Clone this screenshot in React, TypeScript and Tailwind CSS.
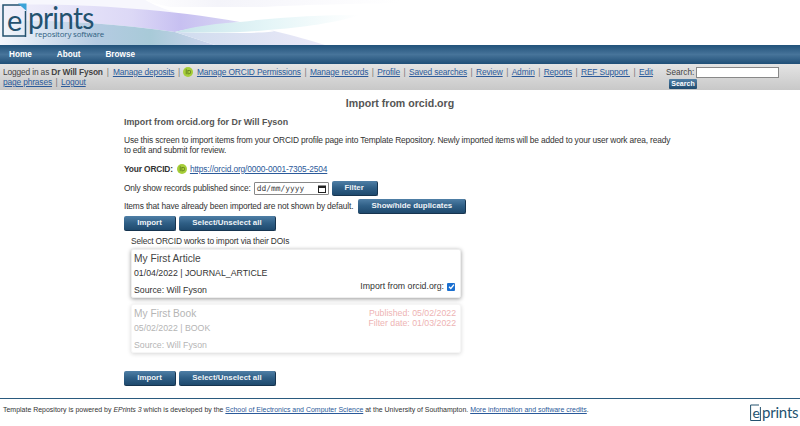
const font = { fontFamily: '"Liberation Sans", Arial, sans-serif' };

function Btn({ children, w }: { children: string; w: string }) {
  return (
    <button className={`${w} h-[15px] shrink-0 rounded-[2px] bg-gradient-to-b from-[#4f7fa6] via-[#2f5f86] to-[#1f4a6e] border-b border-r border-[#16344f] text-[#eef3f7] font-bold text-[7.9px] tracking-normal leading-[12px] pb-[1px] text-center`}>
      {children}
    </button>
  );
}

function Orcid({ size = 10 }: { size?: number }) {
  return (
    <svg width={size} height={size} viewBox="0 0 20 20" className="shrink-0">
      <circle cx="10" cy="10" r="10" fill="#a6ce39" />
      <rect x="5.6" y="6" width="1.6" height="8.4" fill="#5d7a1d" />
      <circle cx="6.4" cy="4.4" r="1" fill="#5d7a1d" />
      <path d="M9 6h3a4.2 4.2 0 0 1 0 8.4H9z M10.5 7.4v5.6h1.5a2.8 2.8 0 0 0 0-5.6z" fill="#5d7a1d" fillRule="evenodd" />
    </svg>
  );
}

function A({ children }: { children: React.ReactNode }) {
  return <a className="text-[#2b5a9a] underline">{children}</a>;
}

function Sep() {
  return <span className="text-[#777] mx-[3.5px]">|</span>;
}

function Logo() {
  return (
    <div className="relative w-[110px] h-[45px]">
      <svg width="30" height="38" viewBox="0 0 30 38" className="absolute left-[2px] top-[3px]">
        <path d="M21 2H1v31H23.5" fill="none" stroke="#24526f" strokeWidth="1.5" />
        <path d="M16 0.5 L24.5 0.5 V8 z" fill="#3ba3d8" />
        <path d="M23.5 8v26" fill="none" stroke="#24526f" strokeWidth="1.5" />
      </svg>
      <span className="absolute left-[7px] top-[2px] text-[29px] leading-[36px] text-[#24526f]" style={{ fontFamily: '"Lato", sans-serif' }}>e</span>
      <span className="absolute left-[28px] top-0 text-[31px] leading-[34px] tracking-[-0.8px] whitespace-nowrap text-[#24526f] scale-x-90 origin-left" style={{ fontFamily: '"Lato", sans-serif', fontWeight: 400 }}>prints</span>
      <span className="absolute left-[35px] top-[29px] text-[7.9px] leading-[11px] whitespace-nowrap text-[#2f5f7f]" style={{ fontFamily: '"Open Sans", sans-serif' }}>repository software</span>
    </div>
  );
}

export default function App() {
  return (
    <div className="w-[800px] h-[426px] bg-white overflow-hidden text-[8.4px] tracking-[-0.15px] text-[#333]" style={font}>
      <header className="relative h-[45px] bg-white">
        <svg width="800" height="45" viewBox="0 0 800 45" className="absolute inset-0">
          <defs>
            <linearGradient id="sw1" x1="0" x2="1">
              <stop offset="0" stopColor="#f2f1fb" />
              <stop offset="0.55" stopColor="#dcd8f6" />
              <stop offset="0.75" stopColor="#c7c0f1" />
              <stop offset="1" stopColor="#d9d6f4" />
            </linearGradient>
            <linearGradient id="sw2" x1="0" x2="1">
              <stop offset="0" stopColor="#c8e4ea" />
              <stop offset="0.5" stopColor="#e4f5f7" />
              <stop offset="1" stopColor="#ffffff" />
            </linearGradient>
            <linearGradient id="sw3" x1="0" x2="1">
              <stop offset="0" stopColor="#f4f6fc" />
              <stop offset="0.45" stopColor="#b4cbe2" />
              <stop offset="0.7" stopColor="#a8cad8" />
              <stop offset="1" stopColor="#cfd5ee" />
            </linearGradient>
            <linearGradient id="sw4" x1="0" x2="1">
              <stop offset="0" stopColor="#cfdcee" />
              <stop offset="1" stopColor="#ebe9f8" />
            </linearGradient>
            <linearGradient id="sw5" x1="0" x2="1">
              <stop offset="0" stopColor="#ffffff" />
              <stop offset="0.3" stopColor="#f4f4fa" />
              <stop offset="1" stopColor="#ffffff" />
            </linearGradient>
          </defs>
          <path d="M140 0H400V3C340 4 300 5 262 7H170z" fill="url(#sw5)" />
          <path d="M0 0H145C160 8 170 11 178 13C140 8 60 5 0 6z" fill="#f7f7fd" />
          <path d="M0 5C70 3 160 8 240 22C215 25 190 28 175 32C120 24 60 20 0 20z" fill="url(#sw1)" />
          <path d="M0 20C60 20 120 24 175 32L215 45H0z" fill="url(#sw3)" />
          <path d="M175 32C230 34 290 33 270 30C295 36 312 41 325 45H215z" fill="url(#sw4)" />
          <path d="M175 32C195 26 220 23 240 22C280 17 320 15 360 15C340 22 300 28 268 30C240 33 210 33 175 32z" fill="url(#sw2)" />
        </svg>
        <div className="relative">
          <Logo />
        </div>
      </header>
      <nav className="h-[19px] flex items-center pl-[9px] pt-[1px] gap-[25px] bg-gradient-to-b from-[#21527a] via-[#47749a] to-[#1f4f77] text-white font-bold text-[8.2px] tracking-normal">
        <span>Home</span>
        <span>About</span>
        <span>Browse</span>
      </nav>
      <div className="h-[26px] flex bg-gradient-to-b from-[#e4e4e4] to-[#c8c8c8] pl-[3px] leading-[10px] text-[#444]">
        <div className="w-[655px] pt-[3px]">
          <span>Logged in as <b>Dr Will Fyson</b></span>
          <span className="mx-[4px] text-[#777]">|</span>
          <A>Manage deposits</A><Sep />
          <span className="inline-block align-[-2px] mr-[3.5px]"><Orcid /></span>
          <A>Manage ORCID Permissions</A><Sep />
          <A>Manage records</A><Sep />
          <A>Profile</A><Sep />
          <A>Saved searches</A><Sep />
          <A>Review</A><Sep />
          <A>Admin</A><Sep />
          <A>Reports</A><Sep />
          <A>REF Support&nbsp;</A><Sep />
          <A>Edit page phrases</A><Sep />
          <A>Logout</A>
        </div>
        <div className="ml-[8px] pt-[3px] flex flex-col">
          <div className="flex items-center gap-[2px]">
            <span className="text-[8.2px] tracking-normal">Search:</span>
            <span className="w-[83px] h-[11px] bg-white border border-[#888]" />
          </div>
          <span className="mt-[1px] ml-[3px] w-[28px] h-[10px] rounded-[1px] bg-gradient-to-b from-[#4f7fa6] to-[#1f4a6e] text-white font-bold text-[7px] tracking-normal leading-[10px] text-center">Search</span>
        </div>
      </div>
      <h1 className="text-center font-bold text-[10.6px] tracking-normal leading-[13px] text-[#555] mt-[7px]">Import from orcid.org</h1>
      <main className="w-[552px] ml-[124px]">
        <h2 className="mt-[6px] font-bold text-[8.9px] tracking-normal leading-[12px] text-[#555]">Import from orcid.org for Dr Will Fyson</h2>
        <p className="mt-[8px] leading-[9.5px]">Use this screen to import items from your ORCID profile page into Template Repository. Newly imported items will be added to your user work area, ready to edit and submit for review.</p>
        <div className="mt-[9px] flex items-center gap-[3px] h-[10px]">
          <b className="mr-[1px]">Your ORCID:</b>
          <Orcid size={10} />
          <span><A>https://orcid.org/0000-0001-7305-2504</A></span>
        </div>
        <div className="mt-[7px] flex items-center h-[15px]">
          <span>Only show records published since:</span>
          <span className="ml-[3px] w-[75px] h-[13px] border border-[#888] rounded-[1px] bg-white flex items-center justify-between px-[2px] text-[7.9px] tracking-normal text-[#444]" style={{ fontFamily: '"DejaVu Sans Mono", monospace' }}>
            <span>dd/mm/yyyy</span>
            <svg width="8" height="8" viewBox="0 0 8 8"><rect x="0.5" y="1" width="7" height="6.5" fill="none" stroke="#222" /><rect x="0.5" y="1" width="7" height="2" fill="#222" /></svg>
          </span>
          <span className="ml-[3px]"><Btn w="w-[46px]">Filter</Btn></span>
        </div>
        <div className="mt-[3px] flex items-center h-[15px]">
          <span>Items that have already been imported are not shown by default.</span>
          <span className="ml-[5px]"><Btn w="w-[108px]">Show/hide duplicates</Btn></span>
        </div>
        <div className="mt-[2px] flex gap-[3px] h-[15px]">
          <Btn w="w-[52px]">Import</Btn>
          <Btn w="w-[97px]">Select/Unselect all</Btn>
        </div>
        <div className="ml-[7px] mt-[5px] leading-[10px]">Select ORCID works to import via their DOIs</div>
        <section className="ml-[7px] mt-[3px] w-[330px] h-[49px] bg-white rounded-[2px] border border-[#eee] shadow-[0_1px_4px_rgba(0,0,0,0.4)] relative pl-[2px] pt-[2px] tracking-normal">
          <div className="text-[10.2px] leading-[13px] text-[#444]">My First Article</div>
          <div className="mt-[3px] text-[8.75px] leading-[11px]">01/04/2022 | JOURNAL_ARTICLE</div>
          <div className="mt-[6px] text-[8.75px] leading-[11px]">Source: Will Fyson</div>
          <div className="absolute right-[5px] top-[31px] flex items-center gap-[3px] text-[8.75px] leading-[11px]">
            <span>Import from orcid.org:</span>
            <span className="w-[8px] h-[8px] rounded-[1px] bg-[#1a6fd0] flex items-center justify-center">
              <svg width="7" height="7" viewBox="0 0 8 8"><path d="M1.2 4.2 3.2 6.2 6.8 1.8" fill="none" stroke="#fff" strokeWidth="1.5" /></svg>
            </span>
          </div>
        </section>
        <section className="ml-[7px] mt-[6px] w-[330px] h-[49px] bg-white rounded-[2px] border border-[#f6f6f6] shadow-[0_1px_4px_rgba(0,0,0,0.16)] relative pl-[2px] pt-[2px] tracking-normal text-[#b5b5b5]">
          <div className="text-[10.2px] leading-[13px]">My First Book</div>
          <div className="mt-[3px] text-[8.75px] leading-[11px]">05/02/2022 | BOOK</div>
          <div className="mt-[6px] text-[8.75px] leading-[11px]">Source: Will Fyson</div>
          <div className="absolute right-[4px] top-[3px] text-right text-[8.75px] leading-[10px] text-[#eeb4b4]">
            <div>Published: 05/02/2022</div>
            <div>Filter date: 01/03/2022</div>
          </div>
        </section>
        <div className="mt-[18px] flex gap-[3px] h-[15px]">
          <Btn w="w-[52px]">Import</Btn>
          <Btn w="w-[97px]">Select/Unselect all</Btn>
        </div>
      </main>
      <footer className="mt-[12px] border-t-[1.5px] border-[#2a5a7e] relative pl-[3px] pt-[6px] text-[6.98px] tracking-normal leading-[9px]">
        Template Repository is powered by <i>EPrints 3</i> which is developed by the <A>School of Electronics and Computer Science</A> at the University of Southampton. <A>More information and software credits</A>.
        <div className="absolute left-[750px] top-[5px] w-[48px] h-[20px]">
          <svg width="12" height="18" viewBox="0 0 12 18" className="absolute left-0 top-0">
            <path d="M9 1H.6V16.5H10.4M10.4 3V17" fill="none" stroke="#24526f" strokeWidth="1" />
          </svg>
          <span className="absolute left-[2.5px] top-0 text-[14px] leading-[17px] text-[#24526f]" style={{ fontFamily: '"Lato", sans-serif' }}>e</span>
          <span className="absolute left-[12px] top-0 text-[15px] leading-[17px] tracking-[-0.2px] text-[#24526f]" style={{ fontFamily: '"Lato", sans-serif' }}>prints</span>
        </div>
      </footer>
    </div>
  );
}
